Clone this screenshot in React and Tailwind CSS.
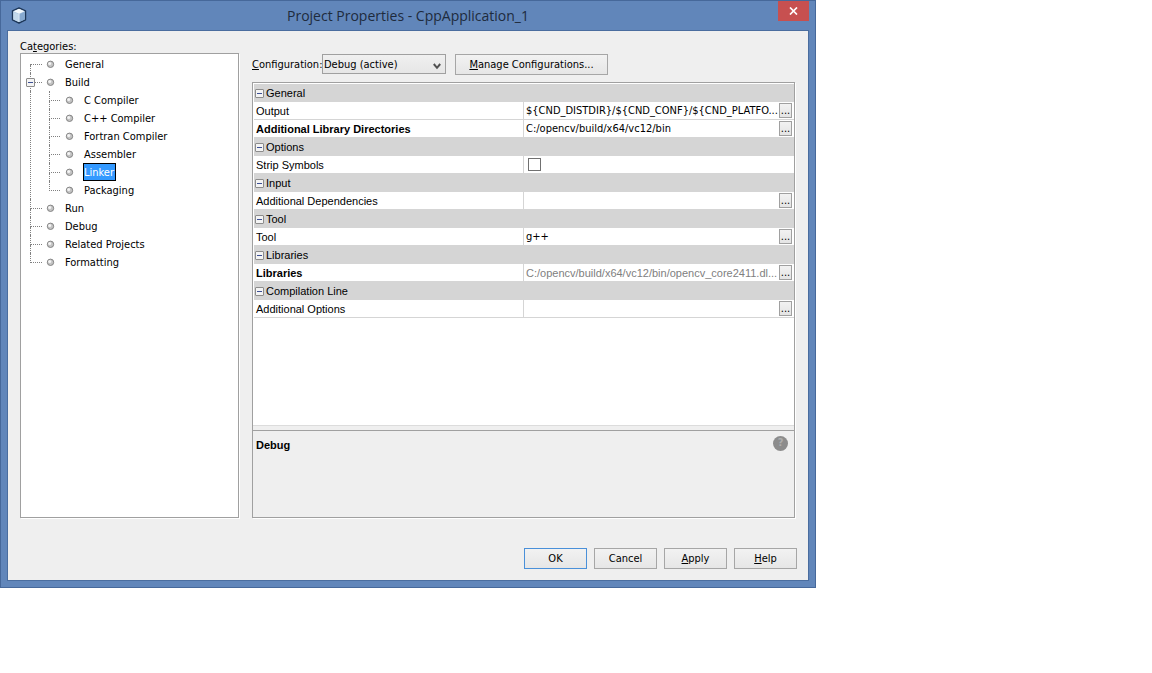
import React, { useState } from 'react'

const categories = [
  { name: 'General' },
  {
    name: 'Build',
    children: ['C Compiler', 'C++ Compiler', 'Fortran Compiler', 'Assembler', 'Linker', 'Packaging'],
  },
  { name: 'Run' },
  { name: 'Debug' },
  { name: 'Related Projects' },
  { name: 'Formatting' },
]

const groups = [
  {
    title: 'General',
    rows: [
      { name: 'Output', value: '${CND_DISTDIR}/${CND_CONF}/${CND_PLATFO...' },
      { name: 'Additional Library Directories', value: 'C:/opencv/build/x64/vc12/bin', changed: true },
    ],
  },
  { title: 'Options', rows: [{ name: 'Strip Symbols', type: 'checkbox' }] },
  { title: 'Input', rows: [{ name: 'Additional Dependencies', value: '' }] },
  { title: 'Tool', rows: [{ name: 'Tool', value: 'g++' }] },
  {
    title: 'Libraries',
    rows: [
      {
        name: 'Libraries',
        value: 'C:/opencv/build/x64/vc12/bin/opencv_core2411.dl...',
        changed: true,
        readOnly: true,
      },
    ],
  },
  { title: 'Compilation Line', rows: [{ name: 'Additional Options', value: '' }] },
]

const CubeIcon = () => (
  <svg width="16" height="17" viewBox="0 0 16 17" aria-hidden="true">
    <path d="M8 1 L14.5 3.8 V12.8 L8 16 L1.5 12.8 V3.8 Z" fill="#a9c4e0" stroke="#1d3658" strokeWidth="1.4" strokeLinejoin="round" />
    <path d="M8 1.8 L13.6 4.2 L8 6.8 L2.4 4.2 Z" fill="#f2f8fc" />
    <path d="M2.3 4.8 L7.6 7.2 V15 L2.3 12.4 Z" fill="#c3d9ec" />
    <path d="M8.3 7.2 L13.7 4.8 V12.4 L8.3 15 Z" fill="#86a9d0" />
    <path d="M8 6.8 V15" stroke="#eef6fb" strokeWidth="0.8" />
  </svg>
)

const Bullet = () => (
  <svg className="shrink-0" width="9" height="9" viewBox="0 0 9 9" aria-hidden="true">
    <circle cx="4.5" cy="4.3" r="3.2" fill="#c4c4c4" stroke="#7c7c7c" strokeWidth="0.9" />
    <circle cx="3.7" cy="3.5" r="1.5" fill="#f4f4f4" />
  </svg>
)

const Minus = ({ label, className = '' }) => (
  <button
    type="button"
    aria-label={label}
    className={`flex size-[9px] shrink-0 items-center justify-center rounded-[1px] border border-[#8c8c8c] bg-[#f4f4f4] ${className}`}
  >
    <span className="h-px w-[5px] bg-[#3c4f94]"></span>
  </button>
)

const Branch = ({ up, down, className }) => (
  <span className={`flex shrink-0 flex-col ${className}`}>
    <span className={`h-[10px] border-b border-dotted border-[#808080] ${up ? 'border-l' : ''}`}></span>
    <span className={`h-2 border-dotted border-[#808080] ${down ? 'border-l' : ''}`}></span>
  </span>
)

const TreeLabel = ({ name, selected, onSelect }) => (
  <button
    type="button"
    onClick={() => onSelect(name)}
    className={`h-[18px] border pr-px leading-[17px] whitespace-nowrap ${
      selected ? 'border-black bg-[#3399ff] text-white' : 'border-transparent'
    }`}
  >
    {name}
  </button>
)

const CategoryTree = () => {
  const [selected, setSelected] = useState('Linker')
  return (
    <ul className="flex-1 border border-[#a0a0a0] bg-white pt-px pl-[9px] shadow-[1px_1px_0_#ffffff]">
      {categories.map((item, i) => (
        <li key={item.name}>
          <div className="relative flex h-[18px] items-center">
            <Branch up={i > 0} down={i < categories.length - 1} className="w-3" />
            {item.children && <Minus label={`Collapse ${item.name}`} className="absolute top-[5px] -left-1" />}
            <span className="mr-[9px] ml-1 flex"><Bullet /></span>
            <TreeLabel name={item.name} selected={selected === item.name} onSelect={setSelected} />
          </div>
          {item.children && (
            <ul className="border-l border-dotted border-[#808080] pl-[18px]">
              {item.children.map((child, j) => (
                <li key={child} className="flex h-[18px] items-center">
                  <Branch up down={j < item.children.length - 1} className="w-[11px]" />
                  <span className="mr-[9px] ml-[5px] flex"><Bullet /></span>
                  <TreeLabel name={child} selected={selected === child} onSelect={setSelected} />
                </li>
              ))}
            </ul>
          )}
        </li>
      ))}
    </ul>
  )
}

const PropertyValue = ({ row }) => {
  if (row.type === 'checkbox') {
    return (
      <input
        type="checkbox"
        aria-label={row.name}
        className="ml-0.5 block size-[13px] appearance-none border border-[#707070] bg-white checked:bg-[#3399ff]"
      />
    )
  }
  return (
    <div className="flex h-[17px] items-center justify-between">
      <span
        className={`leading-4 whitespace-nowrap ${
          row.readOnly ? "font-['Liberation_Sans',Arial,sans-serif] text-[#808080]" : ''
        }`}
      >
        {row.value}
      </span>
      <button
        type="button"
        aria-label={`Edit ${row.name}`}
        className="mr-0.5 flex h-[15px] w-[13px] shrink-0 items-end justify-center border border-[#a0a0a0] bg-linear-to-b from-[#f2f2f2] to-[#e4e4e4] leading-3"
      >
        ...
      </button>
    </div>
  )
}

const PropertySheet = () => (
  <table className="w-full table-fixed border-separate border-spacing-0">
    <colgroup>
      <col className="w-1/2" />
      <col className="w-1/2" />
    </colgroup>
    {groups.map(group => (
      <tbody key={group.title}>
        <tr>
          <th colSpan={2} scope="colgroup" className="h-[18px] bg-[#d5d5d5] p-0 text-left font-normal">
            <div className="flex items-center gap-0.5 pl-px font-['Liberation_Sans',Arial,sans-serif] leading-4">
              <Minus label={`Collapse ${group.title}`} />
              {group.title}
            </div>
          </th>
        </tr>
        {group.rows.map(row => (
          <tr key={row.name}>
            <th
              scope="row"
              className={`h-[18px] border-r border-b border-[#d5d5d5] p-0 pl-0.5 text-left font-['Liberation_Sans',Arial,sans-serif] leading-4 ${
                row.changed ? 'font-bold' : 'font-normal'
              }`}
            >
              {row.name}
            </th>
            <td className="h-[18px] border-b border-[#d5d5d5] p-0 pl-0.5">
              <PropertyValue row={row} />
            </td>
          </tr>
        ))}
      </tbody>
    ))}
  </table>
)

const DialogButton = ({ primary, children }) => (
  <button
    type="button"
    className={`h-[21px] w-[63px] border bg-linear-to-b from-[#f2f2f2] to-[#e6e6e6] leading-4 ${
      primary ? 'border-[#4a90d9]' : 'border-[#a6a6a6]'
    }`}
  >
    {children}
  </button>
)

const App = () => {
  return (
    <div className="min-h-screen bg-white font-['DejaVu_Sans_Condensed','Noto_Sans',sans-serif] text-[11px] text-black">
      <main className="w-full max-w-[816px] border border-[#46689a] bg-[#6186ba] px-1.5 pb-1.5">
        <header className="grid h-[29px] grid-cols-[1fr_auto_1fr] items-center">
          <div className="pl-1"><CubeIcon /></div>
          <h1 className="font-['Open_Sans','Noto_Sans',sans-serif] text-[14px] leading-5 text-[#1e2b3d]">
            Project Properties - CppApplication_1
          </h1>
          <button
            type="button"
            aria-label="Close"
            className="flex h-5 w-[31px] items-center justify-center self-start justify-self-end bg-[#c75050]"
          >
            <svg width="9" height="8" viewBox="0 0 9 8" aria-hidden="true">
              <path d="M1 0.5 L8 7.5 M8 0.5 L1 7.5" stroke="#ffffff" strokeWidth="1.7" />
            </svg>
          </button>
        </header>

        <div className="border border-[#4a6d9f] bg-[#efefef] pt-2 pb-[11px]">
          <div className="flex gap-[13px] pr-[13px] pl-3">
            <section className="flex w-[219px] shrink-0 flex-col">
              <h2 className="h-3.5 leading-4">Ca<u>t</u>egories:</h2>
              <CategoryTree />
            </section>

            <section className="min-w-0 flex-1 pt-[15px]">
              <div className="flex h-[21px] items-start">
                <label htmlFor="configuration" className="w-[70px] leading-[21px] whitespace-nowrap">
                  <u>C</u>onfiguration:
                </label>
                <div className="relative">
                  <select
                    id="configuration"
                    className="block h-5 w-[124px] appearance-none border border-[#a0a0a0] bg-linear-to-b from-[#f0f0f0] to-[#e6e6e6] pl-px leading-[17px]"
                  >
                    <option>Debug (active)</option>
                    <option>Release</option>
                  </select>
                  <svg className="pointer-events-none absolute top-[9px] right-[5px]" width="8" height="7" viewBox="0 0 8 7" aria-hidden="true">
                    <path d="M0.8 1 L4 4.8 L7.2 1" fill="none" stroke="#505050" strokeWidth="2" />
                  </svg>
                </div>
                <button
                  type="button"
                  className="ml-[9px] h-[21px] w-[153px] border border-[#a6a6a6] bg-linear-to-b from-[#f2f2f2] to-[#e6e6e6] leading-4"
                >
                  <u>M</u>anage Configurations...
                </button>
              </div>

              <div className="mt-[7px] border border-[#a0a0a0] shadow-[1px_1px_0_#ffffff]">
                <div className="min-h-[343px] border-b border-[#dcdcdc] bg-white pt-px pl-px">
                  <PropertySheet />
                </div>
                <div className="mt-1 flex min-h-[87px] justify-between border-t border-[#a0a0a0] pt-[5px] pr-1.5 pl-[3px]">
                  <h3 className="pt-px font-['Liberation_Sans',Arial,sans-serif] leading-4 font-bold">Debug</h3>
                  <button
                    type="button"
                    disabled
                    className="flex size-[15px] items-center justify-center rounded-full bg-[#8c8c8c] font-bold text-[#adadad]"
                  >
                    ?
                  </button>
                </div>
              </div>
            </section>
          </div>

          <footer className="mt-[30px] flex justify-end gap-[7px] pr-[11px]">
            <DialogButton primary>OK</DialogButton>
            <DialogButton>Cancel</DialogButton>
            <DialogButton><u>A</u>pply</DialogButton>
            <DialogButton><u>H</u>elp</DialogButton>
          </footer>
        </div>
      </main>
    </div>
  )
}

export default App
